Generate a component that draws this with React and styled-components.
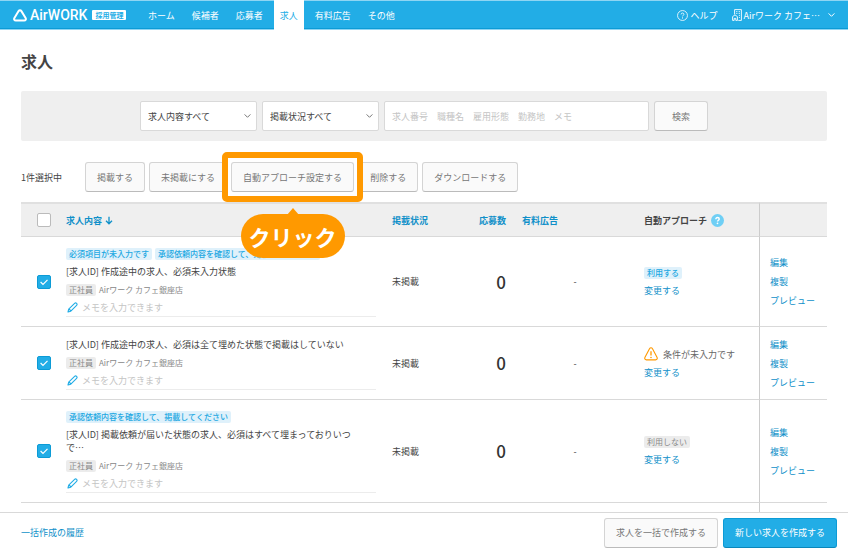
import React, { useState } from "react";
import styled, { createGlobalStyle, ThemeProvider } from "styled-components";

const theme = {
  brand: "#22ade6",
  brandDark: "#0c9bd6",
  brandLight: "#8fd5f3",
  link: "#0f90c9",
  text: "#444",
  sub: "#888",
  faint: "#c4c4c4",
  line: "#d9d9d9",
  panel: "#efefef",
  accent: "#ff9900",
};

const GlobalStyle = createGlobalStyle`
  *, *::before, *::after {
    box-sizing: border-box;
  }
  body {
    margin: 0;
    background: #fff;
    color: ${theme.text};
  }
  body, button, input, select {
    font-family: "Noto Sans CJK JP", "Noto Sans", sans-serif;
    font-size: 9px;
    line-height: 13px;
  }
  a {
    color: ${theme.link};
    text-decoration: none;
  }
`;

const Page = styled.div`
  height: 100vh;
  display: flex;
  flex-direction: column;
`;

const Header = styled.header`
  flex: none;
  height: 30px;
  display: flex;
  align-items: stretch;
  padding: 0 13px;
  color: #fff;
  background: ${(props) => props.theme.brand};
  box-shadow: inset 0 1px 0 ${(props) => props.theme.brandLight},
    inset 0 -1px 0 ${(props) => props.theme.brandLight},
    inset 0 -2px 0 ${(props) => props.theme.brandDark};
`;

const Logo = styled.a`
  display: flex;
  align-items: center;
  width: 129px;
  color: #fff;
`;

const LogoName = styled.span`
  margin: 0 5px 0 3px;
  font-family: Roboto, sans-serif;
  font-size: 14px;
  font-weight: 500;
  line-height: 14px;
`;

const LogoBadge = styled.span`
  padding: 0 3px;
  border-radius: 1px;
  background: #fff;
  color: ${(props) => props.theme.brand};
  font-size: 7px;
  font-weight: 700;
  line-height: 10px;
  white-space: nowrap;
`;

const Nav = styled.nav`
  flex: 1;
  display: flex;
  gap: 5px;
`;

const NavItem = styled.a`
  display: flex;
  align-items: center;
  padding: 0 6px;
  white-space: nowrap;
  color: ${(props) => (props.$active ? props.theme.brand : "#fff")};
  background: ${(props) => (props.$active ? "#fff" : "transparent")};
`;

const HeaderTools = styled.div`
  display: flex;
  align-items: center;
  gap: 14px;
`;

const HelpLink = styled.a`
  display: flex;
  align-items: center;
  gap: 3px;
  color: #fff;
`;

const AccountButton = styled.button`
  display: flex;
  align-items: center;
  gap: 2px;
  padding: 0;
  border: 0;
  background: none;
  color: #fff;
  white-space: nowrap;
  cursor: pointer;
  & > :last-child {
    margin-left: 6px;
  }
`;

const Main = styled.main`
  flex: 1;
  min-height: 0;
  overflow: hidden;
  padding: 0 21px;
`;

const Title = styled.h1`
  margin: 20px 0 18px;
  font-size: 16px;
  font-weight: 700;
  line-height: 23px;
`;

const Filters = styled.form`
  display: flex;
  justify-content: center;
  align-items: center;
  gap: 5px;
  height: 50px;
  border-radius: 2px;
  background: ${(props) => props.theme.panel};
`;

const SelectBox = styled.span`
  position: relative;
  width: 117px;
  svg {
    position: absolute;
    right: 6px;
    top: 12px;
    pointer-events: none;
  }
`;

const Select = styled.select`
  appearance: none;
  width: 100%;
  height: 30px;
  padding: 0 20px 0 7px;
  border: 1px solid ${(props) => props.theme.line};
  border-radius: 2px;
  background: #fff;
  color: ${(props) => props.theme.text};
`;

const SearchInput = styled.input`
  width: 265px;
  height: 30px;
  padding: 0 7px;
  border: 1px solid ${(props) => props.theme.line};
  border-radius: 2px;
  background: #fff;
  &::placeholder {
    color: ${(props) => props.theme.faint};
  }
`;

const Button = styled.button`
  height: 30px;
  padding: 0 ${(props) => (props.$wide ? 17 : 11)}px;
  border: 1px solid ${(props) => (props.$primary ? props.theme.brandDark : "#d4d4d4")};
  border-bottom-color: ${(props) => (props.$primary ? "#0a87bb" : "#bbb")};
  border-radius: 3px;
  background: ${(props) => (props.$primary ? props.theme.brand : "#fafafa")};
  color: ${(props) => (props.$primary ? "#fff" : "#777")};
  white-space: nowrap;
  cursor: pointer;
`;

const Actions = styled.div`
  display: flex;
  align-items: center;
  gap: 4px;
  margin: 21px 0 10px;
`;

const Selected = styled.span`
  width: 60px;
`;

const Guide = styled.span`
  position: relative;
  z-index: 1;
`;

const GuideFrame = styled.span`
  position: absolute;
  inset: -10px -9px;
  border: 6px solid ${(props) => props.theme.accent};
  border-radius: 5px;
  pointer-events: none;
`;

const Balloon = styled.strong`
  position: absolute;
  top: 52px;
  left: 50%;
  transform: translateX(-50%);
  width: 104px;
  border-radius: 22px;
  background: ${(props) => props.theme.accent};
  color: #fff;
  font-size: 22px;
  font-weight: 700;
  line-height: 44px;
  text-align: center;
  white-space: nowrap;
  &::before {
    content: "";
    position: absolute;
    top: -6px;
    left: 46px;
    border: 6px solid transparent;
    border-top: 0;
    border-bottom: 7px solid ${(props) => props.theme.accent};
  }
`;

const Table = styled.table`
  width: 100%;
  table-layout: fixed;
  border-collapse: separate;
  border-spacing: 0;
`;

const Th = styled.th`
  width: ${(props) => props.$width};
  height: 35px;
  padding: 0 0 0 ${(props) => props.$indent || 0}px;
  border-top: 2px solid #e0e0e0;
  border-bottom: 1px solid ${(props) => props.theme.line};
  border-left: ${(props) => (props.$divided ? "1px solid #ccc" : "0")};
  background: ${(props) => props.theme.panel};
  text-align: ${(props) => props.$align || "left"};
  font-weight: 700;
  white-space: nowrap;
`;

const HeadLabel = styled.span`
  display: flex;
  align-items: center;
  gap: 4px;
`;

const SortLink = styled.a`
  display: inline-flex;
  align-items: center;
  gap: 3px;
`;

const Td = styled.td`
  padding: 0 0 0 ${(props) => props.$indent || 0}px;
  border-bottom: 1px solid ${(props) => props.theme.line};
  border-left: ${(props) => (props.$divided ? "1px solid #ccc" : "0")};
  text-align: ${(props) => props.$align || "left"};
  vertical-align: middle;
`;

const JobCell = styled(Td)`
  padding: 11px 16px 9px 0;
`;

const RestCell = styled(Td)`
  height: 73px;
`;

const CheckBox = styled.label`
  position: relative;
  display: block;
  width: 14px;
  height: 14px;
  margin: 0 auto;
  input {
    appearance: none;
    display: block;
    width: 14px;
    height: 14px;
    margin: 0;
    border: 1px solid #bbb;
    border-radius: 2px;
    background: #fff;
  }
  input:checked {
    border-color: ${(props) => props.theme.brandDark};
    background: ${(props) => props.theme.brand};
  }
  svg {
    position: absolute;
    inset: 0;
    pointer-events: none;
  }
`;

const Tags = styled.div`
  display: flex;
  gap: 3px;
  margin-bottom: 5px;
`;

const Tag = styled.span`
  display: inline-block;
  padding: 0 3px;
  border-radius: 2px;
  background: ${(props) => (props.$muted ? "#ececec" : "#dff1fb")};
  color: ${(props) => (props.$muted ? "#8a8a8a" : "#22a8e2")};
  font-size: 8px;
  font-weight: ${(props) => (props.$muted ? 400 : 500)};
  line-height: 12px;
  white-space: nowrap;
`;

const JobName = styled.div`
  margin-bottom: 6px;
  padding-right: 20px;
`;

const Meta = styled.div`
  display: flex;
  gap: 3px;
  color: ${(props) => props.theme.sub};
  font-size: 8px;
  line-height: 12px;
`;

const Memo = styled.label`
  display: flex;
  align-items: center;
  gap: 4px;
  height: 18px;
  margin-top: 3px;
  padding-left: 1px;
  border-bottom: 1px solid #ececec;
  input {
    flex: 1;
    padding: 0;
    border: 0;
    outline: 0;
    background: none;
  }
  input::placeholder {
    color: ${(props) => props.theme.faint};
  }
`;

const Count = styled.span`
  color: #333;
  font-size: 17px;
  font-weight: 500;
  line-height: 20px;
`;

const Approach = styled.div`
  display: flex;
  flex-direction: column;
  align-items: flex-start;
  gap: 5px;
`;

const Warning = styled.span`
  display: flex;
  align-items: center;
  gap: 5px;
  height: 14px;
  color: #666;
  white-space: nowrap;
`;

const RowLinks = styled.div`
  display: flex;
  flex-direction: column;
  align-items: flex-start;
  gap: 6px;
  a {
    white-space: nowrap;
  }
`;

const Footer = styled.footer`
  flex: none;
  display: flex;
  align-items: center;
  gap: 5px;
  height: 40px;
  padding: 0 11px 0 21px;
  border-top: 1px solid ${(props) => props.theme.line};
  background: #fff;
  a {
    margin-right: auto;
  }
`;

const LogoMark = () => (
  <svg width="14" height="13" viewBox="0 0 14 13" fill="none">
    <path
      d="M5.6 2.1C6.3 1 7.7 1 8.4 2.1L12.6 9C13.3 10.3 12.6 11.6 11.2 11.6H2.8C1.4 11.6 0.7 10.3 1.4 9Z"
      stroke="#fff"
      strokeWidth="2"
      strokeLinejoin="round"
    />
  </svg>
);

const QuestionIcon = ({ size, filled }) => (
  <svg width={size} height={size} viewBox="0 0 12 12" fill="none">
    <circle
      cx="6"
      cy="6"
      r={filled ? 6 : 5.4}
      fill={filled ? "#6fcff5" : "none"}
      stroke={filled ? "none" : "#fff"}
      strokeWidth="0.9"
    />
    <path
      d="M4.5 4.8C4.5 3.9 5.1 3.3 6 3.3S7.6 3.9 7.6 4.7C7.6 5.8 6 5.8 6 7"
      stroke="#fff"
      strokeWidth={filled ? 1.3 : 0.9}
    />
    <circle cx="6" cy="8.6" r={filled ? 0.8 : 0.6} fill="#fff" />
  </svg>
);

const BuildingIcon = () => (
  <svg width="10" height="12" viewBox="0 0 10 12" fill="none" stroke="#fff" strokeWidth="0.9">
    <path d="M2.6 5.4V0.6H9.4V11.4H6.3" />
    <path d="M4.2 2.6H5.4M6.7 2.6H7.9M4.2 4.4H5.4M6.7 4.4H7.9M6.9 6.4H7.9M6.9 8.4H7.9" />
    <path d="M0.6 11.4V7.6L3 5.9L5.4 7.6V11.4H3.8V9.4H2.2V11.4Z" />
  </svg>
);

const ChevronIcon = ({ color }) => (
  <svg width="7" height="6" viewBox="0 0 7 6" fill="none">
    <path d="M0.6 1.4L3.5 4.3L6.4 1.4" stroke={color} strokeWidth="1" />
  </svg>
);

const ArrowDownIcon = () => (
  <svg width="8" height="9" viewBox="0 0 8 9" fill="none">
    <path d="M4 0.8V7.6M1 4.8L4 7.8L7 4.8" stroke={theme.link} strokeWidth="1.3" />
  </svg>
);

const CheckIcon = () => (
  <svg width="14" height="14" viewBox="0 0 14 14" fill="none">
    <path d="M3.6 7L6 9.4L10.5 4.8" stroke="#fff" strokeWidth="1.2" />
  </svg>
);

const PenIcon = () => (
  <svg width="11" height="11" viewBox="0 0 11 11" fill="none">
    <path
      d="M1 10L1.7 7.2L7.6 1.3C8.2 0.7 9 0.7 9.6 1.3C10.2 1.9 10.2 2.7 9.6 3.3L3.8 9.2Z M2 7L4 9"
      stroke={theme.brand}
      strokeWidth="1.1"
      strokeLinejoin="round"
    />
  </svg>
);

const WarningIcon = () => (
  <svg width="14" height="14" viewBox="0 0 14 14" fill="none">
    <path
      d="M5.5 1.7C6.2 0.5 7.8 0.5 8.5 1.7L13 10.2C13.7 11.7 13 12.9 11.6 12.9H2.4C1 12.9 0.3 11.7 1 10.2Z"
      stroke={theme.accent}
      strokeWidth="1.1"
    />
    <path d="M7 4.3V8.6" stroke={theme.accent} strokeWidth="1.3" />
    <circle cx="7" cy="10.5" r="0.8" fill={theme.accent} />
  </svg>
);

const navItems = ["ホーム", "候補者", "応募者", "求人", "有料広告", "その他"];

const jobs = [
  {
    id: 1,
    tags: ["必須項目が未入力です", "承認依頼内容を確認して、掲載してください"],
    name: "[求人ID] 作成途中の求人、必須未入力状態",
    approach: "on",
  },
  {
    id: 2,
    tags: [],
    name: "[求人ID] 作成途中の求人、必須は全て埋めた状態で掲載はしていない",
    approach: "incomplete",
  },
  {
    id: 3,
    tags: ["承認依頼内容を確認して、掲載してください"],
    name: "[求人ID] 掲載依頼が届いた状態の求人、必須はすべて埋まっておりいつで…",
    approach: "off",
  },
];

const Check = ({ label, checked, onChange }) => (
  <CheckBox>
    <input type="checkbox" aria-label={label} checked={checked} onChange={onChange} />
    {checked && <CheckIcon />}
  </CheckBox>
);

const ApproachStatus = ({ status }) => {
  if (status === "on") return <Tag>利用する</Tag>;
  if (status === "off") return <Tag $muted>利用しない</Tag>;
  return (
    <Warning>
      <WarningIcon />
      条件が未入力です
    </Warning>
  );
};

const JobRow = ({ job, checked, onToggle }) => (
  <tr>
    <Td>
      <Check label={job.name} checked={checked} onChange={onToggle} />
    </Td>
    <JobCell>
      {job.tags.length > 0 && (
        <Tags>
          {job.tags.map((tag) => (
            <Tag key={tag}>{tag}</Tag>
          ))}
        </Tags>
      )}
      <JobName>{job.name}</JobName>
      <Meta>
        <Tag $muted>正社員</Tag>
        Airワーク カフェ銀座店
      </Meta>
      <Memo>
        <PenIcon />
        <input type="text" aria-label="メモ" placeholder="メモを入力できます" />
      </Memo>
    </JobCell>
    <Td>未掲載</Td>
    <Td $align="right">
      <Count>0</Count>
    </Td>
    <Td $indent={16} $align="center">-</Td>
    <Td $indent={16}>
      <Approach>
        <ApproachStatus status={job.approach} />
        <a href="#approach">変更する</a>
      </Approach>
    </Td>
    <Td $indent={10} $divided>
      <RowLinks>
        <a href="#edit">編集</a>
        <a href="#copy">複製</a>
        <a href="#preview">プレビュー</a>
      </RowLinks>
    </Td>
  </tr>
);

const App = () => {
  const [all, setAll] = useState(false);
  const [selected, setSelected] = useState([1, 2, 3]);

  const toggle = (id) => {
    setSelected(selected.includes(id) ? selected.filter((s) => s !== id) : [...selected, id]);
  };

  const toggleAll = () => {
    setSelected(all ? [] : jobs.map((job) => job.id));
    setAll(!all);
  };

  return (
    <ThemeProvider theme={theme}>
      <GlobalStyle />
      <Page>
        <Header>
          <Logo href="#home">
            <LogoMark />
            <LogoName>AirWORK</LogoName>
            <LogoBadge>採用管理</LogoBadge>
          </Logo>
          <Nav>
            {navItems.map((item) => (
              <NavItem key={item} href="#nav" $active={item === "求人"}>
                {item}
              </NavItem>
            ))}
          </Nav>
          <HeaderTools>
            <HelpLink href="#help">
              <QuestionIcon size={11} />
              ヘルプ
            </HelpLink>
            <AccountButton type="button">
              <BuildingIcon />
              Airワーク カフェ…
              <ChevronIcon color="#fff" />
            </AccountButton>
          </HeaderTools>
        </Header>

        <Main>
          <Title>求人</Title>
          <Filters onSubmit={(e) => e.preventDefault()}>
            <SelectBox>
              <Select aria-label="求人内容">
                <option>求人内容すべて</option>
              </Select>
              <ChevronIcon color="#777" />
            </SelectBox>
            <SelectBox>
              <Select aria-label="掲載状況">
                <option>掲載状況すべて</option>
              </Select>
              <ChevronIcon color="#777" />
            </SelectBox>
            <SearchInput
              type="text"
              aria-label="キーワード"
              placeholder="求人番号　職種名　雇用形態　勤務地　メモ"
            />
            <Button type="submit" $wide>検索</Button>
          </Filters>

          <Actions>
            <Selected>1件選択中</Selected>
            <Button type="button">掲載する</Button>
            <Button type="button">未掲載にする</Button>
            <Guide>
              <Button type="button">自動アプローチ設定する</Button>
              <GuideFrame />
              <Balloon>クリック</Balloon>
            </Guide>
            <Button type="button">削除する</Button>
            <Button type="button">ダウンロードする</Button>
          </Actions>

          <Table>
            <thead>
              <tr>
                <Th $width="45px">
                  <Check label="すべて選択" checked={all} onChange={toggleAll} />
                </Th>
                <Th>
                  <SortLink href="#sort">
                    求人内容
                    <ArrowDownIcon />
                  </SortLink>
                </Th>
                <Th $width="64px">
                  <a href="#sort">掲載状況</a>
                </Th>
                <Th $width="50px" $align="right">
                  <a href="#sort">応募数</a>
                </Th>
                <Th $width="122px" $indent={16}>
                  <a href="#sort">有料広告</a>
                </Th>
                <Th $width="131px" $indent={16}>
                  <HeadLabel>
                    自動アプローチ
                    <QuestionIcon size={13} filled />
                  </HeadLabel>
                </Th>
                <Th $width="68px" $divided />
              </tr>
            </thead>
            <tbody>
              {jobs.map((job) => (
                <JobRow
                  key={job.id}
                  job={job}
                  checked={selected.includes(job.id)}
                  onToggle={() => toggle(job.id)}
                />
              ))}
              <tr>
                <RestCell colSpan={6} />
                <RestCell $divided />
              </tr>
            </tbody>
          </Table>
        </Main>

        <Footer>
          <a href="#history">一括作成の履歴</a>
          <Button type="button">求人を一括で作成する</Button>
          <Button type="button" $primary>新しい求人を作成する</Button>
        </Footer>
      </Page>
    </ThemeProvider>
  );
};

export default App;
